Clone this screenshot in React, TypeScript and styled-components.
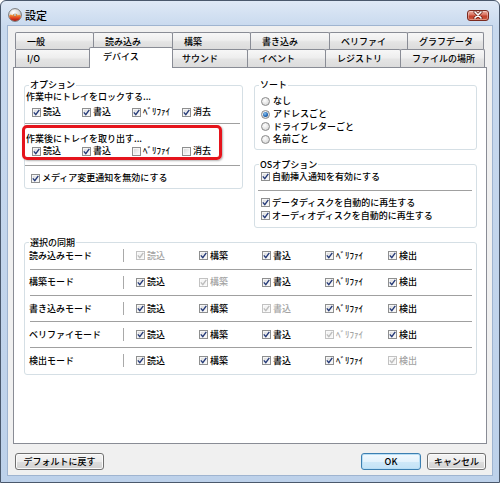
import styled, { createGlobalStyle } from 'styled-components';

const GlobalStyle = createGlobalStyle`
  html, body {
    margin: 0;
    padding: 0;
    background: #fff;
  }
  body {
    font-family: "Noto Sans CJK JP", "Noto Sans", sans-serif;
    font-size: 9px;
    font-weight: 500;
    line-height: 12px;
    color: #000;
  }
  *, *::before, *::after {
    box-sizing: border-box;
  }
`;

const Window = styled.div`
  width: 500px;
  height: 483px;
  display: flex;
  flex-direction: column;
  padding: 0 6px 6px;
  border: 1px solid #4a586c;
  border-radius: 6px 6px 0 0;
  background: linear-gradient(#dfe9f6, #c8d9ee 26px, #bdd1ea);
`;

const TitleBar = styled.div`
  height: 24px;
  flex: none;
  display: flex;
  align-items: center;
  gap: 3px;
  padding: 4px 4px 0 1px;
`;

const Title = styled.span`
  font-size: 11px;
  line-height: 14px;
`;

const CloseButton = styled.div`
  margin-left: auto;
  width: 22px;
  height: 11px;
  display: flex;
  align-items: center;
  justify-content: center;
  border: 1px solid #7b2a1f;
  border-radius: 3px;
  background: linear-gradient(#eeb0a3, #d8705d 45%, #c1402c 55%, #cf5a3f);
  box-shadow: inset 0 0 0 1px rgba(255, 255, 255, 0.35);
`;

const Client = styled.div`
  flex: 1;
  display: flex;
  flex-direction: column;
  padding: 6px 5px 5px;
  border: 1px solid #9fb4d0;
  background: #f0f0f0;
`;

const TabStrip = styled.div`
  display: flex;
  flex-direction: column;
  padding-left: 2px;
`;

const TabRow = styled.div<{ $h: number }>`
  display: flex;
  align-items: flex-end;
  height: ${(p) => p.$h}px;
`;

const Tab = styled.div<{ $w: number; $active?: boolean }>`
  position: relative;
  z-index: ${(p) => (p.$active ? 1 : 0)};
  flex: none;
  width: ${(p) => p.$w + (p.$active ? 4 : 0)}px;
  height: ${(p) => (p.$active ? 'calc(100% + 3px)' : '100%')};
  margin: ${(p) => (p.$active ? '-2px -3px -1px -2px' : '0 -1px 0 0')};
  display: flex;
  align-items: center;
  padding: ${(p) => (p.$active ? '0 0 2px 13px' : '1px 0 0 11px')};
  border: 1px solid #898c95;
  border-bottom: none;
  border-radius: 2px 2px 0 0;
  background: ${(p) =>
    p.$active ? '#fff' : 'linear-gradient(#f7f7f7, #eeeeee 45%, #e4e4e4 55%, #dcdcdc)'};
  white-space: nowrap;
`;

const Panel = styled.div`
  height: 377px;
  flex: none;
  padding: 11px 9px 0 10px;
  border: 1px solid #898c95;
  background: #fff;
`;

const TopGrid = styled.div`
  display: grid;
  grid-template-columns: 219px 223px;
  column-gap: 11px;
  align-items: start;
`;

const Stack = styled.div`
  display: flex;
  flex-direction: column;
  gap: 9px;
`;

const Group = styled.fieldset<{ $mt?: number }>`
  margin: ${(p) => p.$mt ?? 0}px 0 0;
  min-width: 0;
  padding: 0;
  border: 1px solid #d5dfe5;
  border-radius: 3px;
`;

const Legend = styled.legend`
  margin-left: 4px;
  padding: 0 1px;
  line-height: 12px;
`;

const Caption = styled.div`
  height: 12px;
  padding-left: 1px;
  white-space: nowrap;
`;

const CheckRow = styled.div<{ $mt?: number }>`
  display: flex;
  height: 12px;
  margin-top: ${(p) => p.$mt ?? 0}px;
  padding-left: 7px;
`;

const Cell = styled.div<{ $w: number }>`
  width: ${(p) => p.$w}px;
  flex: none;
  display: flex;
  align-items: center;
`;

const Rule = styled.div<{ $m: string }>`
  height: 2px;
  margin: ${(p) => p.$m};
  border-top: 1px solid #a0a0a0;
  border-bottom: 1px solid #fff;
`;

const Highlight = styled.div`
  width: 200px;
  height: 35px;
  margin-left: -3px;
  padding-top: 5px;
  border: 3px solid #e5141c;
  border-radius: 5px;
  box-shadow: 1px 1px 2px rgba(0, 0, 0, 0.3);
`;

const Line = styled.div<{ $mt?: number; $mb?: number; $pl?: number }>`
  display: flex;
  align-items: center;
  height: 12px;
  margin: ${(p) => p.$mt ?? 0}px 0 ${(p) => p.$mb ?? 0}px;
  padding-left: ${(p) => p.$pl ?? 6}px;
  white-space: nowrap;
`;

const RadioList = styled.div`
  padding: 4px 0 3px 6px;
`;

const RadioRow = styled.div`
  height: 12.7px;
  display: flex;
  align-items: center;
  gap: 3px;
`;

const RadioDot = styled.span<{ $on?: boolean }>`
  width: 9px;
  height: 9px;
  flex: none;
  display: flex;
  align-items: center;
  justify-content: center;
  border: 1px solid #8a8a8a;
  border-radius: 50%;
  background: radial-gradient(circle at 40% 35%, #ffffff, #e2e2e2 60%, #c9c9c9);
  &::after {
    content: '';
    display: ${(p) => (p.$on ? 'block' : 'none')};
    width: 5px;
    height: 5px;
    border-radius: 50%;
    background: radial-gradient(circle at 40% 35%, #8cc6f2, #2468b5 55%, #0c3a78);
  }
`;

const CheckLabel = styled.label<{ $disabled?: boolean }>`
  display: flex;
  align-items: center;
  gap: 2px;
  color: ${(p) => (p.$disabled ? '#a3a3a3' : '#000')};
  white-space: nowrap;
`;

const Box = styled.span<{ $disabled?: boolean }>`
  width: 9px;
  height: 9px;
  flex: none;
  display: flex;
  align-items: center;
  justify-content: center;
  border: 1px solid ${(p) => (p.$disabled ? '#c2c2c2' : '#8e8f8f')};
  background: ${(p) =>
    p.$disabled ? '#f4f4f4' : 'linear-gradient(135deg, #d6d6d6, #f4f4f4 70%, #ffffff)'};
  box-shadow: inset 0 0 0 1px ${(p) => (p.$disabled ? '#fafafa' : '#f6f6f6')};
`;

const SyncRow = styled.div<{ $first?: boolean }>`
  display: flex;
  align-items: center;
  height: ${(p) => (p.$first ? 20 : 26.2)}px;
  margin: 0 4px 0 5px;
  padding-bottom: ${(p) => (p.$first ? 6 : 0)}px;
  border-top: ${(p) => (p.$first ? 'none' : '1px solid #a0a0a0')};
`;

const ModeName = styled.div`
  width: 94px;
  margin-left: -1px;
  flex: none;
`;

const VBar = styled.div`
  width: 1px;
  height: 13px;
  margin-right: 12px;
  flex: none;
  background: #a9a9a9;
`;

const ButtonBar = styled.div`
  display: flex;
  gap: 6px;
  height: 17px;
  margin-top: 9px;
  padding: 0 1px 0 2px;
`;

const Button = styled.button<{ $w: number; $default?: boolean; $push?: boolean }>`
  width: ${(p) => p.$w}px;
  height: 17px;
  margin-left: ${(p) => (p.$push ? 'auto' : '0')};
  padding: 0;
  font-family: inherit;
  font-size: 9px;
  font-weight: inherit;
  line-height: 12px;
  color: #000;
  border: 1px solid ${(p) => (p.$default ? '#3c7fb1' : '#707070')};
  border-radius: 3px;
  background: ${(p) =>
    p.$default
      ? 'linear-gradient(#f2f9fe, #e3f2fc 50%, #cfe9f9 50%, #c3e2f6)'
      : 'linear-gradient(#f4f4f4, #ececec 50%, #dedede 50%, #d2d2d2)'};
  box-shadow: inset 0 0 0 1px ${(p) => (p.$default ? '#b8def5' : '#fbfbfb')};
`;

const AppIcon = () => (
  <svg width="14" height="14" viewBox="0 0 14 14">
    <defs>
      <radialGradient id="disc" cx="0.4" cy="0.3" r="0.8">
        <stop offset="0" stopColor="#ffffff" />
        <stop offset="1" stopColor="#b3b3b3" />
      </radialGradient>
      <linearGradient id="flame" x1="0" y1="0" x2="0" y2="1">
        <stop offset="0" stopColor="#f7b23c" />
        <stop offset="0.6" stopColor="#e2401f" />
        <stop offset="1" stopColor="#9c1a12" />
      </linearGradient>
    </defs>
    <circle cx="7" cy="7" r="6.4" fill="url(#disc)" stroke="#5e5e5e" strokeWidth="0.8" />
    <path
      d="M1.1 8 Q2.8 5.4 4.3 7.6 Q5.4 4.6 7 7.2 Q8.6 4.4 9.8 7.5 Q11.3 5.8 12.9 8 A6 6 0 0 1 1.1 8 Z"
      fill="url(#flame)"
    />
    <circle cx="7" cy="7" r="1.1" fill="#fff" stroke="#6b6b6b" strokeWidth="0.5" />
  </svg>
);

const CloseGlyph = () => (
  <svg width="10" height="8" viewBox="0 0 10 8">
    <path d="M2 1 L8 7 M8 1 L2 7" stroke="#5a1a12" strokeWidth="3" strokeLinecap="round" />
    <path d="M2 1 L8 7 M8 1 L2 7" stroke="#fff" strokeWidth="1.7" strokeLinecap="round" />
  </svg>
);

const Check = ({ label, off, disabled }: { label: string; off?: boolean; disabled?: boolean }) => (
  <CheckLabel $disabled={disabled}>
    <Box $disabled={disabled}>
      {!off && (
        <svg width="7" height="7" viewBox="0 0 7 7">
          <path
            d="M0.8 3.4 L2.8 5.6 L6.3 0.9"
            fill="none"
            stroke={disabled ? '#bdbdbd' : '#253a78'}
            strokeWidth="1.4"
          />
        </svg>
      )}
    </Box>
    {label}
  </CheckLabel>
);

const Radio = ({ label, on }: { label: string; on?: boolean }) => (
  <RadioRow>
    <RadioDot $on={on} />
    {label}
  </RadioRow>
);

const topTabs = [
  { label: '一般', w: 79 },
  { label: '読み込み', w: 80 },
  { label: '構築', w: 79 },
  { label: '書き込み', w: 80 },
  { label: 'ベリファイ', w: 79 },
  { label: 'グラフデータ', w: 77 },
];

const frontTabs = [
  { label: 'I/O', w: 77 },
  { label: 'デバイス', w: 80, active: true },
  { label: 'サウンド', w: 78 },
  { label: 'イベント', w: 79 },
  { label: 'レジストリ', w: 76 },
  { label: 'ファイルの場所', w: 85 },
];

const trayOps = ['読込', '書込', 'ﾍﾞﾘﾌｧｲ', '消去'];
const ejectOn = [true, true, false, false];

const modes = ['読み込みモード', '構築モード', '書き込みモード', 'ベリファイモード', '検出モード'];
const syncCols = ['読込', '構築', '書込', 'ﾍﾞﾘﾌｧｲ', '検出'];

export default function App() {
  return (
    <>
      <GlobalStyle />
      <Window>
        <TitleBar>
          <AppIcon />
          <Title>設定</Title>
          <CloseButton>
            <CloseGlyph />
          </CloseButton>
        </TitleBar>

        <Client>
          <TabStrip>
            <TabRow $h={17}>
              {topTabs.map((t) => (
                <Tab key={t.label} $w={t.w}>
                  {t.label}
                </Tab>
              ))}
            </TabRow>
            <TabRow $h={18}>
              {frontTabs.map((t) => (
                <Tab key={t.label} $w={t.w} $active={t.active}>
                  {t.label}
                </Tab>
              ))}
            </TabRow>
          </TabStrip>

          <Panel>
            <TopGrid>
              <Group>
                <Legend>オプション</Legend>
                <Caption>作業中にトレイをロックする...</Caption>
                <CheckRow $mt={3}>
                  {trayOps.map((op) => (
                    <Cell key={op} $w={50}>
                      <Check label={op} />
                    </Cell>
                  ))}
                </CheckRow>
                <Rule $m="5px 2px 0 0" />
                <Highlight>
                  <Caption>作業後にトレイを取り出す...</Caption>
                  <CheckRow>
                    {trayOps.map((op, i) => (
                      <Cell key={op} $w={50}>
                        <Check label={op} off={!ejectOn[i]} />
                      </Cell>
                    ))}
                  </CheckRow>
                </Highlight>
                <Rule $m="5px 2px 0 0" />
                <Line $mt={5} $mb={4}>
                  <Check label="メディア変更通知を無効にする" />
                </Line>
              </Group>

              <Stack>
                <Group>
                  <Legend>ソート</Legend>
                  <RadioList>
                    <Radio label="なし" />
                    <Radio label="アドレスごと" on />
                    <Radio label="ドライブレターごと" />
                    <Radio label="名前ごと" />
                  </RadioList>
                </Group>

                <Group>
                  <Legend>OSオプション</Legend>
                  <Line>
                    <Check label="自動挿入通知を有効にする" />
                  </Line>
                  <Rule $m="7px 4px 0 3px" />
                  <Line $mt={5}>
                    <Check label="データディスクを自動的に再生する" />
                  </Line>
                  <Line $mt={1} $mb={5}>
                    <Check label="オーディオディスクを自動的に再生する" />
                  </Line>
                </Group>
              </Stack>
            </TopGrid>

            <Group $mt={9}>
              <Legend>選択の同期</Legend>
              {modes.map((mode, row) => (
                <SyncRow key={mode} $first={row === 0}>
                  <ModeName>{mode}</ModeName>
                  <VBar />
                  {syncCols.map((col, i) => (
                    <Cell key={col} $w={63}>
                      <Check label={col} disabled={i === row} />
                    </Cell>
                  ))}
                </SyncRow>
              ))}
            </Group>
          </Panel>

          <ButtonBar>
            <Button $w={89}>デフォルトに戻す</Button>
            <Button $w={60} $default $push>
              OK
            </Button>
            <Button $w={59}>キャンセル</Button>
          </ButtonBar>
        </Client>
      </Window>
    </>
  );
}
